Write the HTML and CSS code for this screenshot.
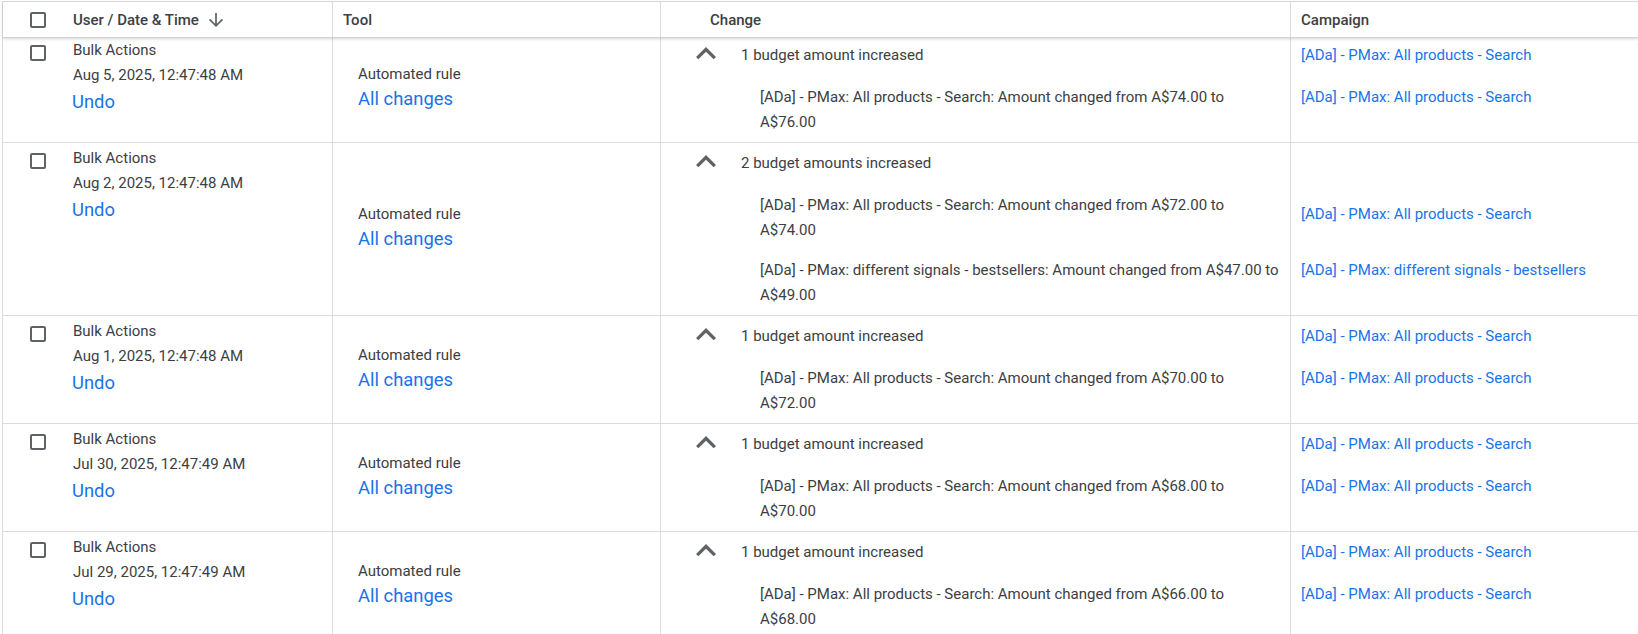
FILE: index.html
```html
<!DOCTYPE html>
<html lang="en">
<head>
<meta charset="utf-8">
<title>Change history</title>
<link rel="stylesheet" href="styles.css">
</head>
<body>
<div class="table">
  <div class="thead">
    <div class="th th-user">
      <span class="checkbox"></span>
      <span class="th-label">User / Date &amp; Time</span>
      <svg class="sort-icon" viewBox="4 4 16 16" width="14" height="14"><path d="M20 12l-1.41-1.41L13 16.17V4h-2v12.17l-5.58-5.59L4 12l8 8 8-8z"/></svg>
    </div>
    <div class="th th-tool">Tool</div>
    <div class="th th-change">Change</div>
    <div class="th th-campaign">Campaign</div>
  </div>

  <div class="tbody">
    <!-- Row 1 -->
    <div class="row">
      <div class="cell cell-user">
        <span class="checkbox"></span>
        <div class="user-info">
          <div class="user-name">Bulk Actions</div>
          <div class="user-date">Aug 5, 2025, 12:47:48 AM</div>
          <a class="link link-lg undo">Undo</a>
        </div>
      </div>
      <div class="cell cell-tool">
        <div class="tool-name">Automated rule</div>
        <a class="link link-lg tool-link">All changes</a>
      </div>
      <div class="cell cell-change">
        <div class="summary"><svg class="chevron" viewBox="6 8 12 7.41" width="20" height="12.35"><path d="M12 8l-6 6 1.41 1.41L12 10.83l4.59 4.58L18 14z"/></svg><span>1 budget amount increased</span></div>
        <div class="detail">[ADa] - PMax: All products - Search: Amount changed from A$74.00 to<br>A$76.00</div>
      </div>
      <div class="cell cell-campaign">
        <div class="summary"><a class="link">[ADa] - PMax: All products - Search</a></div>
        <div class="detail"><a class="link">[ADa] - PMax: All products - Search</a></div>
      </div>
    </div>

    <!-- Row 2 -->
    <div class="row">
      <div class="cell cell-user">
        <span class="checkbox"></span>
        <div class="user-info">
          <div class="user-name">Bulk Actions</div>
          <div class="user-date">Aug 2, 2025, 12:47:48 AM</div>
          <a class="link link-lg undo">Undo</a>
        </div>
      </div>
      <div class="cell cell-tool">
        <div class="tool-name">Automated rule</div>
        <a class="link link-lg tool-link">All changes</a>
      </div>
      <div class="cell cell-change">
        <div class="summary"><svg class="chevron" viewBox="6 8 12 7.41" width="20" height="12.35"><path d="M12 8l-6 6 1.41 1.41L12 10.83l4.59 4.58L18 14z"/></svg><span>2 budget amounts increased</span></div>
        <div class="detail">[ADa] - PMax: All products - Search: Amount changed from A$72.00 to<br>A$74.00</div>
        <div class="detail">[ADa] - PMax: different signals - bestsellers: Amount changed from A$47.00 to<br>A$49.00</div>
      </div>
      <div class="cell cell-campaign">
        <div class="summary"></div>
        <div class="detail detail-mid"><a class="link">[ADa] - PMax: All products - Search</a></div>
        <div class="detail"><a class="link">[ADa] - PMax: different signals - bestsellers</a></div>
      </div>
    </div>

    <!-- Row 3 -->
    <div class="row">
      <div class="cell cell-user">
        <span class="checkbox"></span>
        <div class="user-info">
          <div class="user-name">Bulk Actions</div>
          <div class="user-date">Aug 1, 2025, 12:47:48 AM</div>
          <a class="link link-lg undo">Undo</a>
        </div>
      </div>
      <div class="cell cell-tool">
        <div class="tool-name">Automated rule</div>
        <a class="link link-lg tool-link">All changes</a>
      </div>
      <div class="cell cell-change">
        <div class="summary"><svg class="chevron" viewBox="6 8 12 7.41" width="20" height="12.35"><path d="M12 8l-6 6 1.41 1.41L12 10.83l4.59 4.58L18 14z"/></svg><span>1 budget amount increased</span></div>
        <div class="detail">[ADa] - PMax: All products - Search: Amount changed from A$70.00 to<br>A$72.00</div>
      </div>
      <div class="cell cell-campaign">
        <div class="summary"><a class="link">[ADa] - PMax: All products - Search</a></div>
        <div class="detail"><a class="link">[ADa] - PMax: All products - Search</a></div>
      </div>
    </div>

    <!-- Row 4 -->
    <div class="row">
      <div class="cell cell-user">
        <span class="checkbox"></span>
        <div class="user-info">
          <div class="user-name">Bulk Actions</div>
          <div class="user-date">Jul 30, 2025, 12:47:49 AM</div>
          <a class="link link-lg undo">Undo</a>
        </div>
      </div>
      <div class="cell cell-tool">
        <div class="tool-name">Automated rule</div>
        <a class="link link-lg tool-link">All changes</a>
      </div>
      <div class="cell cell-change">
        <div class="summary"><svg class="chevron" viewBox="6 8 12 7.41" width="20" height="12.35"><path d="M12 8l-6 6 1.41 1.41L12 10.83l4.59 4.58L18 14z"/></svg><span>1 budget amount increased</span></div>
        <div class="detail">[ADa] - PMax: All products - Search: Amount changed from A$68.00 to<br>A$70.00</div>
      </div>
      <div class="cell cell-campaign">
        <div class="summary"><a class="link">[ADa] - PMax: All products - Search</a></div>
        <div class="detail"><a class="link">[ADa] - PMax: All products - Search</a></div>
      </div>
    </div>

    <!-- Row 5 -->
    <div class="row">
      <div class="cell cell-user">
        <span class="checkbox"></span>
        <div class="user-info">
          <div class="user-name">Bulk Actions</div>
          <div class="user-date">Jul 29, 2025, 12:47:49 AM</div>
          <a class="link link-lg undo">Undo</a>
        </div>
      </div>
      <div class="cell cell-tool">
        <div class="tool-name">Automated rule</div>
        <a class="link link-lg tool-link">All changes</a>
      </div>
      <div class="cell cell-change">
        <div class="summary"><svg class="chevron" viewBox="6 8 12 7.41" width="20" height="12.35"><path d="M12 8l-6 6 1.41 1.41L12 10.83l4.59 4.58L18 14z"/></svg><span>1 budget amount increased</span></div>
        <div class="detail">[ADa] - PMax: All products - Search: Amount changed from A$66.00 to<br>A$68.00</div>
      </div>
      <div class="cell cell-campaign">
        <div class="summary"><a class="link">[ADa] - PMax: All products - Search</a></div>
        <div class="detail"><a class="link">[ADa] - PMax: All products - Search</a></div>
      </div>
    </div>
  </div>
</div>
</body>
</html>
```

FILE: styles.css
```css
* { box-sizing: border-box; }

html, body {
  margin: 0;
  padding: 0;
  background: #ffffff;
  height: 100%;
  overflow: hidden;
}

body {
  font-family: Roboto, "Liberation Sans", Arial, sans-serif;
  font-size: 15px;
  color: #3c4043;
}

.table {
  margin: 1px 0 0 2px;
  border-top: 1px solid #dadce0;
  border-left: 1px solid #dadce0;
}

.thead,
.row {
  display: grid;
  grid-template-columns: 330px 328px 630px 1fr;
}

.thead {
  position: relative;
  z-index: 1;
  height: 36px;
  background: #ffffff;
  border-bottom: 1px solid #d0d2d6;
  box-shadow: 0 1px 3px rgba(60, 64, 67, 0.22);
}

.th {
  display: flex;
  align-items: center;
  font-weight: 500;
  font-size: 15px;
  color: #3c4043;
  border-right: 1px solid #dadce0;
}

.th:last-child { border-right: none; }

.th-user { padding-left: 27px; }
.th-user .th-label { margin-left: 27px; }
.sort-icon {
  margin-left: 10px;
  fill: #5f6368;
}
.th-tool { padding-left: 10px; }
.th-change { padding-left: 49px; }
.th-campaign { padding-left: 10px; }

.checkbox {
  display: inline-block;
  flex: none;
  width: 16px;
  height: 16px;
  border: 2px solid #5f6368;
  border-radius: 2px;
  background: #ffffff;
}

.tbody {
  margin-top: -3px;
}

.row {
  border-bottom: 1px solid #dadce0;
}

.cell {
  border-right: 1px solid #dadce0;
}
.cell:last-child { border-right: none; }

/* user column */
.cell-user {
  display: flex;
  align-items: flex-start;
  padding: 3px 0 0 27px;
}
.cell-user .checkbox { margin-top: 7px; }
.user-info {
  margin-left: 27px;
  display: flex;
  flex-direction: column;
  align-items: flex-start;
}
.user-name { line-height: 24px; }
.user-date { line-height: 26px; }

.link {
  color: #1a73e8;
  text-decoration: none;
  cursor: pointer;
}
.link-lg { font-size: 18.4px; }
.undo { line-height: 28px; margin-left: -1px; }

/* tool column */
.cell-tool {
  display: flex;
  flex-direction: column;
  justify-content: center;
  align-items: flex-start;
  padding: 0 0 4px 25px;
}
.tool-name { line-height: 24px; }
.tool-link { line-height: 26px; }

/* change column */
.cell-change {
  padding: 8px 10px 7px 35px;
}
.summary {
  display: flex;
  align-items: center;
  height: 24px;
  line-height: 24px;
}
.chevron {
  flex: none;
  fill: #5f6368;
  margin: 0 25px 3px 0;
}
.cell-change .detail {
  margin-left: 64px;
}
.detail {
  line-height: 25px;
  min-height: 50px;
}
.summary + .detail { margin-top: 18px; }
.detail + .detail { margin-top: 15px; }

/* campaign column */
.cell-campaign {
  padding: 8px 10px 7px 10px;
}
.cell-campaign .detail { height: 50px; }
.detail-mid {
  padding-top: 9px;
}
```
